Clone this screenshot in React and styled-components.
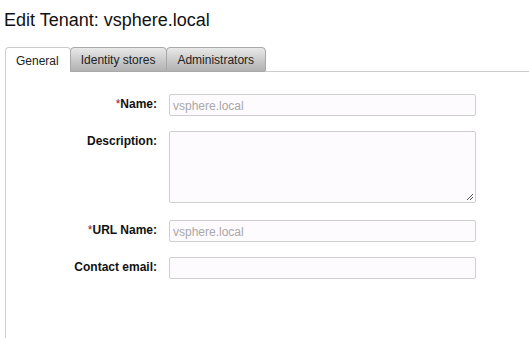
import React from 'react'
import styled, { createGlobalStyle } from 'styled-components'

const GlobalStyle = createGlobalStyle`
    html, body {
        margin: 0;
        padding: 0;
        background: #ffffff;
        font-family: "Liberation Sans", Arial, sans-serif;
        color: #1a1a1a;
    }
`

const Page = styled.div`
    width: 529px;
    height: 338px;
    overflow: hidden;
    display: flex;
    flex-direction: column;
`

const Title = styled.h1`
    margin: 10px 0 0 4px;
    font-size: 18px;
    font-weight: normal;
    line-height: 21px;
    color: #111;
`

const TabBar = styled.div`
    display: flex;
    align-items: flex-end;
    margin: 16px 0 0 5px;
`

const Tab = styled.div`
    height: 25px;
    box-sizing: border-box;
    padding: 1px 11px 0 10px;
    display: flex;
    align-items: center;
    font-size: 12px;
    color: #222;
    border: 1px solid ${props => (props.active ? '#cccccc' : '#a8a8a8')};
    border-bottom: ${props => (props.active ? 'none' : '1px solid #a8a8a8')};
    border-radius: 4px 4px 0 0;
    background: ${props => (props.active ? '#ffffff' : 'linear-gradient(180deg, #e9e9e9 0%, #c9c9c9 55%, #b2b2b2 100%)')};
    margin-right: -1px;
`

const TabFill = styled.div`
    flex: 1;
    border-bottom: 1px solid #cccccc;
`

const Panel = styled.div`
    flex: 1;
    margin-left: 5px;
    border-left: 1px solid #cccccc;
    padding: 22px 0 0 0;
`

const Form = styled.div`
    display: grid;
    grid-template-columns: 151px 307px;
    column-gap: 12px;
    row-gap: 15px;
`

const Label = styled.label`
    text-align: right;
    font-size: 12px;
    font-weight: bold;
    padding-top: 3px;
    color: #111;
`

const Required = styled.span`
    color: #a0102a;
    font-weight: normal;
`

const Field = styled.div`
    height: ${props => props.tall ? '72px' : '22px'};
    box-sizing: border-box;
    border: 1px solid #cfcfcf;
    border-radius: 2px;
    background: #fefbfe;
    font-size: 12px;
    color: #a8a8a8;
    padding: 4px 3px;
    position: relative;
    margin-top: ${props => props.extra || 0};
`

const Grip = styled.svg`
    position: absolute;
    right: 1px;
    bottom: 1px;
`

const rows = [
    { label: 'Name:', required: true, value: 'vsphere.local' },
    { label: 'Description:', tall: true },
    { label: 'URL Name:', required: true, value: 'vsphere.local', extra: '2px' },
    { label: 'Contact email:' },
]

const App = () => (
    <Page>
        <GlobalStyle />
        <Title>Edit Tenant: vsphere.local</Title>
        <TabBar>
            <Tab active>General</Tab>
            <Tab>Identity stores</Tab>
            <Tab>Administrators</Tab>
            <TabFill />
        </TabBar>
        <Panel>
            <Form>
                {rows.map(row => (
                    <React.Fragment key={row.label}>
                        <Label style={row.extra ? { marginTop: row.extra } : undefined}>
                            {row.required && <Required>*</Required>}
                            {row.label}
                        </Label>
                        <Field tall={row.tall} extra={row.extra}>
                            {row.value}
                            {row.tall && (
                                <Grip width="8" height="8" viewBox="0 0 8 8">
                                    <path d="M7 1 L1 7 M7 4 L4 7" stroke="#555" strokeWidth="1" />
                                </Grip>
                            )}
                        </Field>
                    </React.Fragment>
                ))}
            </Form>
        </Panel>
    </Page>
)

export default App
